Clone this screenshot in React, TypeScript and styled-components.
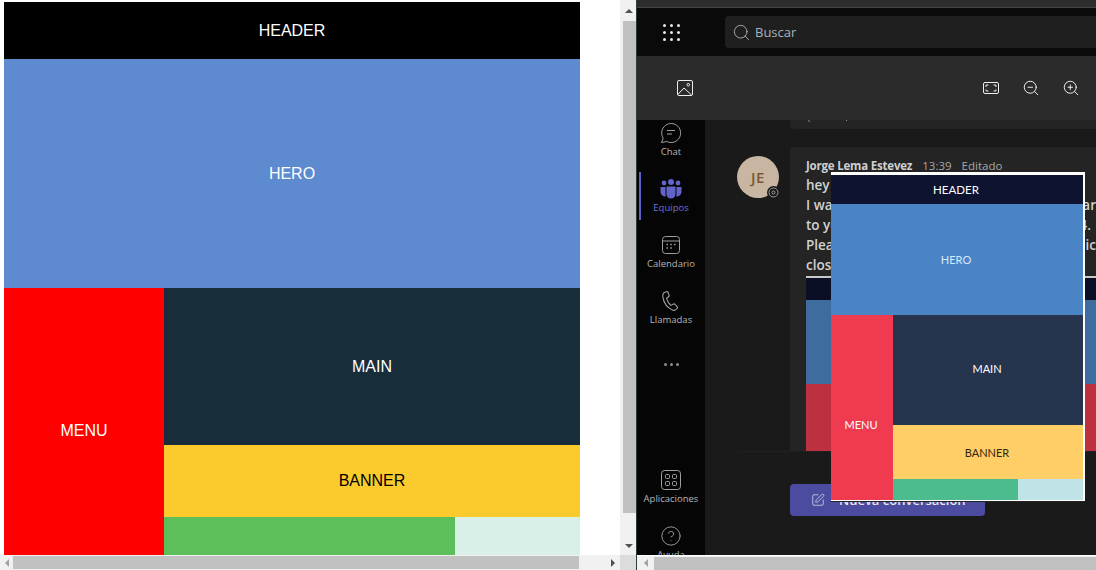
import styled, { createGlobalStyle } from "styled-components"
import { CircleHelp, Search, SquarePen, ZoomIn, ZoomOut } from "lucide-react"

const Global = createGlobalStyle`
    html, body {
        margin: 0;
        padding: 0;
        background: #fff;
        overflow: hidden;
    }
    body {
        font-family: "Liberation Sans", Arial, sans-serif;
    }
`;

const Page = styled.div`
    display: flex;
    width: 1096px;
    height: 570px;
    overflow: hidden;
`;

/* ---------- scrollbars ---------- */

const LeftPane = styled.div`
    display: grid;
    grid-template-columns: 620px 16px;
    grid-template-rows: 555px 15px;
    width: 636px;
    flex: none;
`;

const RightPane = styled.div`
    position: relative;
    display: flex;
    flex-direction: column;
    width: 459px;
    height: 570px;
    margin-left: 1px;
    flex: none;
    overflow: hidden;
    box-shadow: -1px 0 0 #27403f;
`;

const VScroll = styled.div`
    display: flex;
    flex-direction: column;
    align-items: center;
    background: #f1f1f1;
`;

const VThumb = styled.div`
    width: 13px;
    height: 492px;
    margin-left: 2px;
    background: #c1c1c1;
`;

const HScroll = styled.div`
    display: flex;
    align-items: center;
    background: #f1f1f1;
`;

const HThumb = styled.div<{ $w: number }>`
    width: ${(p) => p.$w}px;
    height: 13px;
    background: #c1c1c1;
`;

const ArrowBox = styled.div<{ $w: number; $h: number; $end?: boolean }>`
    display: flex;
    align-items: ${(p) => (p.$end ? "flex-end" : "center")};
    justify-content: center;
    width: ${(p) => p.$w}px;
    height: ${(p) => p.$h}px;
    flex: none;
`;

const ArrowUp = styled.div<{ $c: string }>`
    margin-left: 2px;
    border: 4px solid transparent;
    border-top: 0;
    border-bottom: 4px solid ${(p) => p.$c};
`;

const ArrowDown = styled.div<{ $c: string }>`
    margin: 0 0 7px 2px;
    border: 4px solid transparent;
    border-bottom: 0;
    border-top: 4px solid ${(p) => p.$c};
`;

const ArrowLeft = styled.div<{ $c: string }>`
    border: 4px solid transparent;
    border-left: 0;
    border-right: 4px solid ${(p) => p.$c};
`;

const ArrowRight = styled.div<{ $c: string }>`
    border: 4px solid transparent;
    border-right: 0;
    border-left: 4px solid ${(p) => p.$c};
`;

const Corner = styled.div`
    background: #dcdcdc;
`;

/* ---------- wireframe ---------- */

const LeftDoc = styled.div`
    padding: 2px 0 0 4px;
    background: #fff;
    overflow: hidden;
`;

const Layout = styled.div<{ $cols: string; $rows: string }>`
    display: grid;
    grid-template-columns: ${(p) => p.$cols};
    grid-template-rows: ${(p) => p.$rows};
    grid-template-areas:
        "header header header"
        "hero hero hero"
        "menu main main"
        "menu banner banner"
        "menu foot aside";
`;

const Block = styled.div<{ $area: string; $bg: string; $fg?: string; $size?: number; $pt?: number; $pb?: number }>`
    display: flex;
    align-items: center;
    justify-content: center;
    grid-area: ${(p) => p.$area};
    padding: ${(p) => p.$pt ?? 0}px 0 ${(p) => p.$pb ?? 0}px;
    background: ${(p) => p.$bg};
    color: ${(p) => p.$fg ?? "#fff"};
    font-size: ${(p) => p.$size ?? 16}px;
`;

const PreviewBlock = styled(Block)`
    padding-right: 2px;
`;

const Preview = styled.div`
    position: absolute;
    left: 194px;
    top: 172px;
    width: 252px;
    border: solid #fff;
    border-width: 3px 2px 1px 0;
    box-shadow: 0 1px 0 #222;
    font-family: "Lato", "Open Sans", sans-serif;
`;

/* ---------- teams window ---------- */

const TopStrip = styled.div`
    height: 7px;
    background: #2d2d2d;
    border-bottom: 1px solid #454545;
    flex: none;
`;

const TopBar = styled.div`
    display: flex;
    align-items: center;
    height: 48px;
    background: #0a0a0a;
    flex: none;
`;

const Waffle = styled.div`
    display: flex;
    justify-content: center;
    width: 68px;
    flex: none;
`;

const SearchBox = styled.div`
    display: flex;
    align-items: center;
    gap: 4px;
    flex: 1;
    height: 32px;
    margin-left: 20px;
    padding-left: 7px;
    border-radius: 4px 0 0 4px;
    background: #1f1f1f;
    color: #a8b4bd;
    font: 13px "Open Sans", sans-serif;
`;

const Toolbar = styled.div`
    display: flex;
    align-items: center;
    height: 64px;
    padding: 0 16px 0 40px;
    background: #2b2b2b;
    color: #fff;
    flex: none;
`;

const ToolSpacer = styled.div`
    flex: 1;
`;

const ToolIcons = styled.div`
    display: flex;
    align-items: center;
    gap: 22px;

    & > svg:first-child {
        margin-right: 1px;
    }
`;

const Body = styled.div`
    display: flex;
    height: 435px;
    flex: none;
`;

const Rail = styled.nav`
    display: flex;
    flex-direction: column;
    width: 68px;
    height: 435px;
    background: #050505;
    overflow: hidden;
    flex: none;
`;

const RailItem = styled.div<{ $active?: boolean; $top?: number }>`
    position: relative;
    display: flex;
    flex-direction: column;
    align-items: center;
    height: 56px;
    margin-top: ${(p) => p.$top ?? 0}px;
    color: ${(p) => (p.$active ? "#6e70d6" : "#b5b5b5")};
    font: 9.5px/12px "Open Sans", sans-serif;
    flex: none;

    &::before {
        content: "";
        display: ${(p) => (p.$active ? "block" : "none")};
        position: absolute;
        left: 2px;
        top: -4px;
        width: 2px;
        height: 48px;
        background: #5b5fc7;
    }
`;

const RailIcon = styled.div`
    display: flex;
    align-items: center;
    justify-content: center;
    height: 24px;
    margin-top: 1px;
    margin-bottom: 1px;
`;

const RailDots = styled.div`
    display: flex;
    justify-content: center;
    gap: 3px;
    height: 3px;
    margin-top: 19px;
    flex: none;
`;

const Dot = styled.i`
    width: 3px;
    height: 3px;
    border-radius: 50%;
    background: #8a8a8a;
`;

const Main = styled.main`
    display: flex;
    flex-direction: column;
    flex: 1;
    background: #1a1a1a;
    overflow: hidden;
`;

const PrevCard = styled.div`
    height: 9px;
    margin-left: 85px;
    padding-left: 16px;
    border-radius: 0 0 0 4px;
    background: #242424;
    flex: none;
`;

const MessageRow = styled.div`
    display: flex;
    margin-top: 18px;
    height: 304px;
    flex: none;
`;

const AvatarCol = styled.div`
    width: 85px;
    padding: 9px 0 0 32px;
    box-sizing: border-box;
    flex: none;
`;

const Avatar = styled.div`
    position: relative;
    display: flex;
    align-items: center;
    justify-content: center;
    width: 42px;
    height: 42px;
    border-radius: 50%;
    background: #c8b5a2;
    color: #7a5a35;
    font: 600 15px "Open Sans", sans-serif;
    letter-spacing: 0.5px;
`;

const Presence = styled.div`
    position: absolute;
    right: -1px;
    bottom: -1px;
    display: flex;
    align-items: center;
    justify-content: center;
    width: 13px;
    height: 13px;
    border-radius: 50%;
    background: #1a1a1a;
`;

const Card = styled.div`
    display: flex;
    flex-direction: column;
    flex: 1;
    min-width: 0;
    padding: 11px 0 0 16px;
    border-radius: 4px 0 0 0;
    background: #242424;
    overflow: hidden;
    font-family: "Open Sans", sans-serif;
`;

const Meta = styled.div`
    display: flex;
    gap: 10px;
    height: 17px;
    color: #a6a6a6;
    font-size: 11.5px;
    line-height: 16px;
    white-space: nowrap;
`;

const Author = styled.b`
    color: #cfcfcf;
    font-weight: 700;
    letter-spacing: -0.2px;
`;

const Line = styled.div`
    display: flex;
    justify-content: space-between;
    height: 20px;
    color: #d2d2d2;
    font-size: 13.5px;
    font-weight: 600;
    line-height: 20px;
    white-space: nowrap;
`;

const Tail = styled.span<{ $gap?: number }>`
    margin-right: ${(p) => p.$gap ?? 0}px;
`;

const Attachment = styled.div`
    display: flex;
    flex-direction: column;
    flex: 1;
    margin-top: 1px;
    border-top: 2px solid #c8c8c8;
`;

const AttachBand = styled.div<{ $h: number; $bg: string }>`
    height: ${(p) => p.$h}px;
    background: ${(p) => p.$bg};
    flex: none;
`;

const Divider = styled.div`
    height: 1px;
    margin-left: 32px;
    background: #202020;
    flex: none;
`;

const Compose = styled.button`
    display: flex;
    align-items: center;
    gap: 14px;
    width: 195px;
    height: 32px;
    margin: 32px 0 0 85px;
    padding: 0 0 0 21px;
    border: 0;
    border-radius: 4px;
    background: #4b4ba0;
    color: #e8e8e8;
    font: 600 13px "Open Sans", sans-serif;
    flex: none;
`;

const BottomBar = styled.div`
    display: flex;
    align-items: center;
    height: 15px;
    border-top: 1px solid #fff;
    box-sizing: border-box;
    background: #f1f1f1;
    flex: none;
`;

function Teams() {
    return (
        <svg width="22" height="20" viewBox="0 0 22 20" fill="#6264c9">
            <circle cx="11" cy="3" r="3" />
            <circle cx="4" cy="4" r="2.400" />
            <circle cx="18" cy="4" r="2.400" />
            <path d="M0.500 8h5v7.500c0 .8.200 1.500.400 2C2.800 17.500.500 15.500.500 12.500z" />
            <path d="M21.500 8h-5v7.500c0 .8-.200 1.500-.400 2 3.100 0 5.400-2 5.400-5z" />
            <path d="M6.500 7.500h9v7.500a4.500 4.500 0 0 1-9 0z" />
        </svg>
    );
}

function Chat() {
    return (
        <svg width="22" height="22" viewBox="0 0 22 22" fill="none" stroke="#a0a0a0" strokeWidth="1">
            <path d="M1.500 20.500l1.700-4.300A9.500 9.500 0 1 1 11 20.500a9.500 9.500 0 0 1-4.300-1z" />
            <path d="M7 8.500h8M7 12h5" />
        </svg>
    );
}

function Calendar() {
    return (
        <svg width="20" height="20" viewBox="0 0 20 20" fill="none" stroke="#a0a0a0" strokeWidth="1">
            <rect x="1.500" y="1.500" width="17" height="17" rx="3" />
            <path d="M1.500 6h17" />
            <path d="M5.500 9.500h1.500M9.300 9.500h1.500M13 9.500h1.500M5.500 13h1.500M9.300 13h1.500" strokeWidth="1.600" />
        </svg>
    );
}

function Call() {
    return (
        <svg width="18" height="20" viewBox="0 0 18 20" fill="none" stroke="#a0a0a0" strokeWidth="1.100">
            <path d="M2.200 1.500l2.300-.8c.7-.2 1.300.1 1.600.8l1 2.600c.2.600 0 1.200-.5 1.600L5 7c-.3.300-.4.700-.2 1.100.7 2.300 2 4.300 3.700 5.900.3.300.7.300 1 .100l1.900-1.100c.6-.3 1.200-.2 1.600.3l2.100 2.300c.5.500.5 1.300 0 1.800l-1.300 1.200c-.8.700-1.900 1-2.900.6C5.500 17 1.800 12 .9 6.200.6 4.300 1 2.300 2.200 1.500z" />
        </svg>
    );
}

function Apps() {
    return (
        <svg width="20" height="20" viewBox="0 0 20 20" fill="none" stroke="#a0a0a0" strokeWidth="1">
            <rect x="0.500" y="0.500" width="19" height="19" rx="3" />
            <rect x="4.500" y="4.500" width="4" height="4" rx="1" />
            <rect x="11.500" y="4.500" width="4" height="4" rx="1" />
            <rect x="4.500" y="11.500" width="4" height="4" rx="1" />
            <rect x="11.500" y="11.500" width="4" height="4" rx="1" />
        </svg>
    );
}

function WaffleIcon() {
    const spots = [1.5, 8.5, 15.5];
    return (
        <svg width="17" height="17" viewBox="0 0 17 17" fill="#e8e8e8">
            {spots.map((y) => spots.map((x) => <circle key={`${x}-${y}`} cx={x} cy={y} r="1.500" />))}
        </svg>
    );
}

function ImageIcon() {
    return (
        <svg width="16" height="16" viewBox="0 0 16 16" fill="none" stroke="#eee" strokeWidth="1">
            <rect x="0.500" y="0.500" width="15" height="15" rx="1.500" />
            <path d="M0.800 14.500L7 8l7.500 7" />
            <circle cx="11.300" cy="4.700" r="1.300" />
        </svg>
    );
}

function FitIcon() {
    return (
        <svg width="16" height="12" viewBox="0 0 16 12" fill="none" stroke="#eee" strokeWidth="1">
            <rect x="0.500" y="0.500" width="15" height="11" rx="1.500" />
            <path d="M3 5V3h2.500M10.500 3H13v2M13 7.500V9h-2.500M5.500 9H3V7.500" />
        </svg>
    );
}

function PresenceIcon() {
    return (
        <svg width="11" height="11" viewBox="0 0 11 11" fill="none" stroke="#9a9a9a">
            <circle cx="5.500" cy="5.500" r="4.500" />
            <circle cx="5.500" cy="5.500" r="1.500" />
        </svg>
    );
}

// tails of the previous message's text, the rest sits under the toolbar
function PrevTails() {
    return (
        <svg width="44" height="3" viewBox="0 0 44 3" fill="none" stroke="#8c8c8c" display="block">
            <path d="M2.500 0l1 2M40.500 0v1" />
        </svg>
    );
}

function App() {
    return (
        <Page>
            <Global />
            <LeftPane>
                <LeftDoc>
                    <Layout $cols="160px 291px 125px" $rows="57px 229px 157px 72px 38px">
                        <Block $area="header" $bg="#000">HEADER</Block>
                        <Block $area="hero" $bg="#5e8ad0">HERO</Block>
                        <Block $area="menu" $bg="#ff0000" $pt={18}>MENU</Block>
                        <Block $area="main" $bg="#172e3a">MAIN</Block>
                        <Block $area="banner" $bg="#fbcb2e" $fg="#000">BANNER</Block>
                        <Block $area="foot" $bg="#5cbf5a" />
                        <Block $area="aside" $bg="#d9f0e9" />
                    </Layout>
                </LeftDoc>
                <VScroll>
                    <ArrowBox $w={13} $h={21}><ArrowUp $c="#505050" /></ArrowBox>
                    <VThumb />
                    <ArrowBox $w={13} $h={42} $end><ArrowDown $c="#505050" /></ArrowBox>
                </VScroll>
                <HScroll>
                    <ArrowBox $w={13} $h={13}><ArrowLeft $c="#a3a3a3" /></ArrowBox>
                    <HThumb $w={566} />
                    <ArrowBox $w={27} $h={13} />
                    <ArrowBox $w={14} $h={13}><ArrowRight $c="#505050" /></ArrowBox>
                </HScroll>
                <Corner />
            </LeftPane>
            <RightPane>
                <TopStrip />
                <TopBar>
                    <Waffle><WaffleIcon /></Waffle>
                    <SearchBox>
                        <Search size={19} strokeWidth={1} color="#c4c4c4" />
                        Buscar
                    </SearchBox>
                </TopBar>
                <Toolbar>
                    <ImageIcon />
                    <ToolSpacer />
                    <ToolIcons>
                        <FitIcon />
                        <ZoomOut size={18} strokeWidth={1.2} />
                        <ZoomIn size={18} strokeWidth={1.2} />
                    </ToolIcons>
                </Toolbar>
                <Body>
                    <Rail>
                        <RailItem><RailIcon><Chat /></RailIcon>Chat</RailItem>
                        <RailItem $active><RailIcon><Teams /></RailIcon>Equipos</RailItem>
                        <RailItem><RailIcon><Calendar /></RailIcon>Calendario</RailItem>
                        <RailItem><RailIcon><Call /></RailIcon>Llamadas</RailItem>
                        <RailDots><Dot /><Dot /><Dot /></RailDots>
                        <RailItem $top={101}><RailIcon><Apps /></RailIcon>Aplicaciones</RailItem>
                        <RailItem><RailIcon><CircleHelp size={22} strokeWidth={1} color="#a0a0a0" /></RailIcon>Ayuda</RailItem>
                    </Rail>
                    <Main>
                        <PrevCard><PrevTails /></PrevCard>
                        <MessageRow>
                            <AvatarCol>
                                <Avatar>
                                    JE
                                    <Presence><PresenceIcon /></Presence>
                                </Avatar>
                            </AvatarCol>
                            <Card>
                                <Meta>
                                    <Author>Jorge Lema Estevez</Author>
                                    <span>13:39</span>
                                    <span>Editado</span>
                                </Meta>
                                <Line>hey</Line>
                                <Line><span>I wanted to share the layout</span><Tail>ar</Tail></Line>
                                <Line><span>to you and the rest of the team</span><Tail $gap={5}>4.</Tail></Line>
                                <Line><span>Please review it and tell me</span><Tail>ic</Tail></Line>
                                <Line>close</Line>
                                <Attachment>
                                    <AttachBand $h={22} $bg="#0a0f26" />
                                    <AttachBand $h={84} $bg="#3f6c9e" />
                                    <AttachBand $h={67} $bg="#bd3040" />
                                </Attachment>
                            </Card>
                        </MessageRow>
                        <Divider />
                        <Compose>
                            <SquarePen size={14} strokeWidth={1.2} />
                            Nueva conversación
                        </Compose>
                    </Main>
                </Body>
                <BottomBar>
                    <ArrowBox $w={17} $h={13}><ArrowLeft $c="#a3a3a3" /></ArrowBox>
                    <HThumb $w={442} />
                </BottomBar>
                <Preview>
                    <Layout $cols="62px 125px 65px" $rows="29px 111px 110px 54px 21px">
                        <PreviewBlock $area="header" $bg="#0e1430" $size={11.5}>HEADER</PreviewBlock>
                        <PreviewBlock $area="hero" $bg="#4a84c4" $size={11} $fg="#d6e8fa">HERO</PreviewBlock>
                        <PreviewBlock $area="menu" $bg="#f03a50" $size={11} $pt={34}>MENU</PreviewBlock>
                        <PreviewBlock $area="main" $bg="#26344e" $size={11} $pb={3}>MAIN</PreviewBlock>
                        <PreviewBlock $area="banner" $bg="#ffce66" $fg="#33260a" $size={11}>BANNER</PreviewBlock>
                        <PreviewBlock $area="foot" $bg="#4cbb8e" />
                        <PreviewBlock $area="aside" $bg="#bfe3e7" />
                    </Layout>
                </Preview>
            </RightPane>
        </Page>
    );
}

export default App
